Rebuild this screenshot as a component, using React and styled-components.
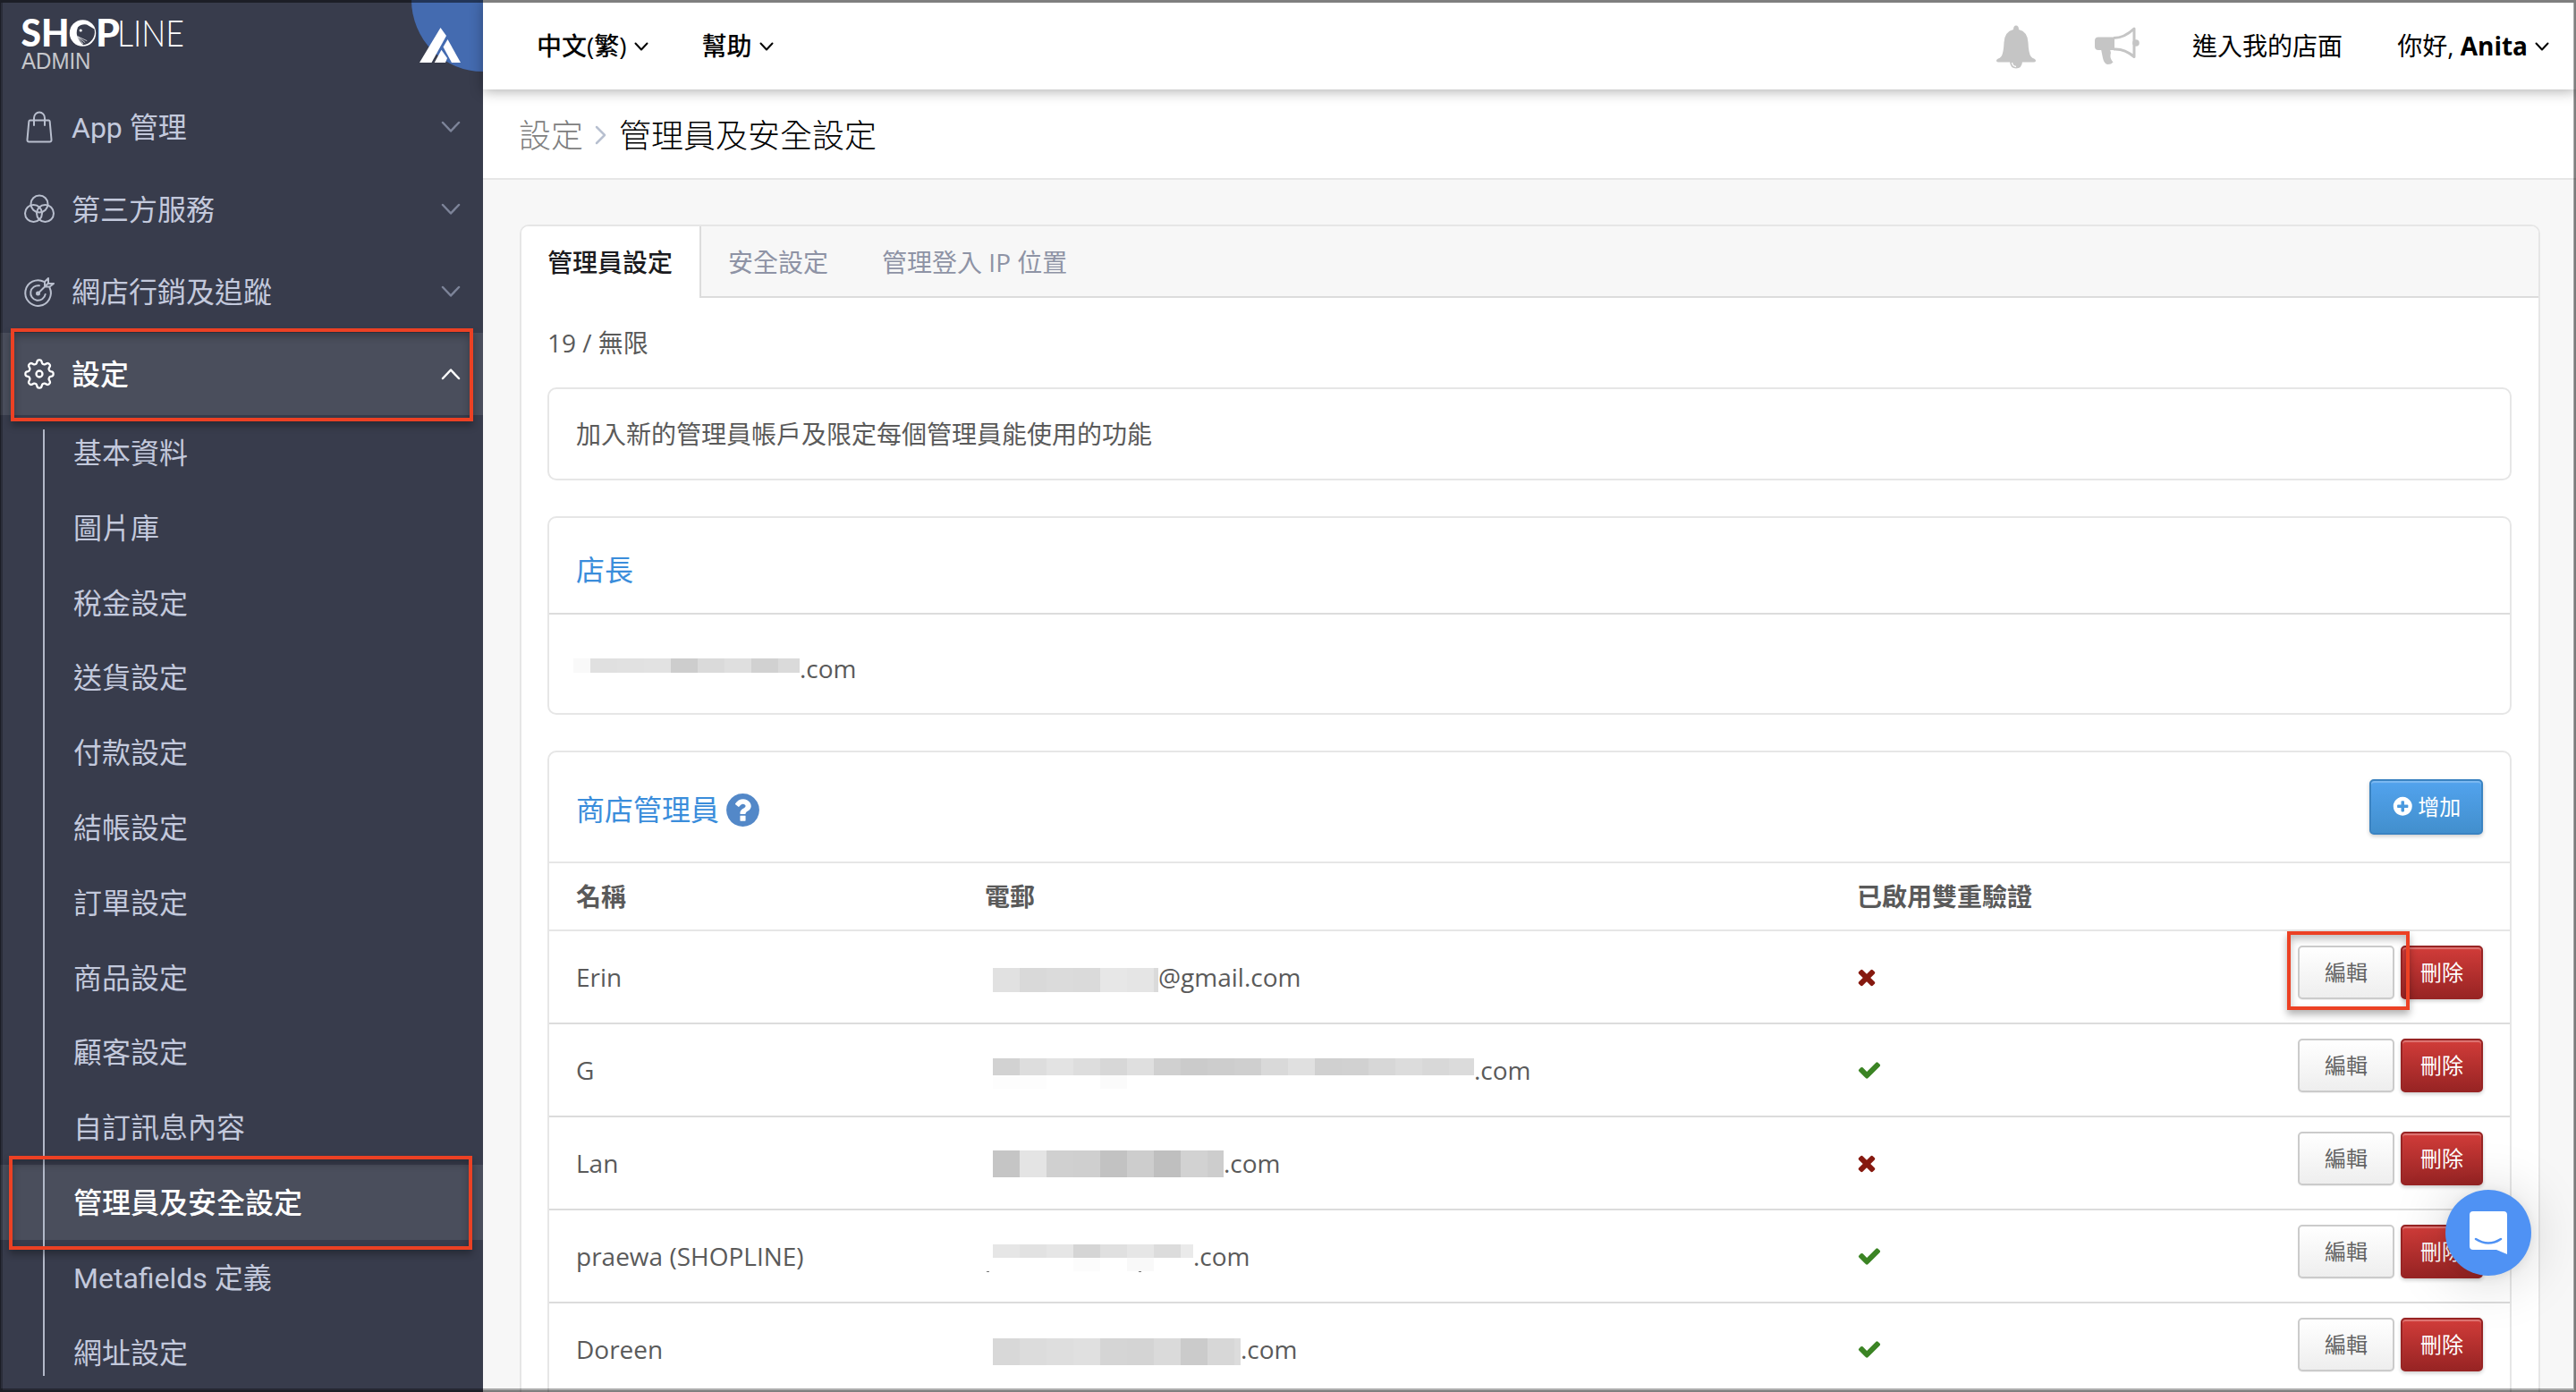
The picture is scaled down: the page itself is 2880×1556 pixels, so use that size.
/**
 * Shop admin - managers and security settings page
 *
 * @version 1.0.0
 */
import React from 'react';
import styled, { createGlobalStyle, css } from 'styled-components';

const GlobalStyle = createGlobalStyle`
  * {
    box-sizing: border-box;
  }

  body {
    margin: 0;
    color: #5a5a5a;
    font: 400 28px/1.4 "Open Sans", "Noto Sans CJK TC", sans-serif;
  }
`;

const Page = styled.div`
  position: relative;
  display: flex;
  width: 2880px;
  height: 1556px;
  overflow: hidden;
  background-color: #f7f7f7;
`;

/* dark edge drawn round the whole window */
const WindowEdge = styled.div`
  position: absolute;
  inset: 0;
  z-index: 9;
  pointer-events: none;
  border: 0 solid rgba(0, 0, 0, 0.5);
  border-width: 3px 2px 2px 1px;
  box-shadow: inset -1px -2px 0 rgba(0, 0, 0, 0.32), inset 2px 0 0 rgba(0, 0, 0, 0.25);
`;

/* ---------- sidebar ---------- */

const Sidebar = styled.aside`
  flex: 0 0 540px;
  color: #c3c9dc;
  background-color: #383c4c;
  font-family: Roboto, "Noto Sans CJK TC", sans-serif;
`;

const Brand = styled.div`
  display: flex;
  justify-content: space-between;
  height: 96px;
`;

const Corner = styled.div`
  width: 80px;
  height: 80px;
  background-color: #446bb0;
  border-bottom-left-radius: 80px;

  svg {
    display: block;
    overflow: visible;
  }
`;

const MenuItem = styled.div`
  position: relative;
  display: flex;
  align-items: center;
  height: 92px;
  padding: 0 26px 0 24px;
  font-size: 32px;

  ${({ $active }) => $active && css`
    color: white;
    font-weight: 500;
    background-color: #4a4e5c;
  `}
`;

const MenuIcon = styled.svg`
  width: 40px;
  height: 40px;
  margin-right: 16px;
  fill: none;
  stroke: ${({ $active }) => ($active ? '#fff' : '#b9bfce')};
  stroke-width: 2;
  stroke-linecap: round;
  stroke-linejoin: round;
`;

const MenuLabel = styled.span`
  flex: 1;
  padding-top: 2px;
`;

const Arrow = styled.svg`
  width: ${({ $width }) => $width || 16}px;
  height: ${({ $height }) => $height || 10}px;
  overflow: visible;
  fill: none;
  stroke: ${({ $color }) => $color || '#000'};
  stroke-width: ${({ $stroke }) => $stroke || 2}px;
  stroke-linecap: round;
  stroke-linejoin: round;
`;

const SubMenu = styled.div`
  position: relative;

  &::before {
    content: '';
    position: absolute;
    left: 48px;
    top: 16px;
    z-index: 1;
    width: 2px;
    height: 1058px;
    background-color: #b3b9c9;
  }
`;

const SubItem = styled.div`
  position: relative;
  display: flex;
  align-items: center;
  height: 83.8px;
  padding: 3px 0 0 82px;
  font-size: 32px;

  ${({ $active }) => $active && css`
    color: white;
    font-weight: 500;
    background-color: #4a4e5c;
  `}
`;

const Highlight = styled.div`
  position: absolute;
  z-index: 3;
  left: ${({ $left }) => $left}px;
  top: ${({ $top }) => $top}px;
  width: ${({ $width }) => $width}px;
  height: ${({ $height }) => $height}px;
  border: 4px solid #ec4124;
  box-shadow: 0 5px 8px rgba(0, 0, 0, 0.3), inset 0 5px 8px rgba(0, 0, 0, 0.25);
`;

/* ---------- top bar ---------- */

const Main = styled.main`
  flex: 1;
  min-width: 0;
`;

const TopBar = styled.header`
  position: relative;
  z-index: 2;
  display: flex;
  align-items: center;
  height: 100px;
  padding: 3px 30px 0 60px;
  color: black;
  background-color: white;
  box-shadow: 0 2px 14px rgba(0, 0, 0, 0.32);
`;

const TopLink = styled.div`
  display: flex;
  align-items: center;
  gap: 8px;
  margin-right: ${({ $gap }) => $gap || 0}px;
  font-weight: ${({ $weight }) => $weight || 400};
  white-space: pre;
`;

const TopRight = styled.div`
  display: flex;
  align-items: center;
  margin-left: auto;
`;

const TopIcon = styled.svg`
  width: ${({ $width }) => $width}px;
  height: 50px;
  margin: 3px ${({ $gap }) => $gap}px 0 0;
  color: #c5c5c5;
`;

const Breadcrumb = styled.div`
  display: flex;
  align-items: center;
  height: 101px;
  padding: 5px 0 0 40px;
  color: black;
  background-color: white;
  border-bottom: 2px solid #e6e6e6;
  font-size: 36px;
  font-weight: 300;

  svg {
    margin: 0 13px 2px 13px;
  }
`;

const Parent = styled.span`
  color: #808080;
`;

/* ---------- content ---------- */

const Panel = styled.section`
  width: 2259px;
  height: 1400px;
  margin: 50px 0 0 41px;
  background-color: white;
  border: 2px solid #e6e6e6;
  border-radius: 10px;
`;

const Tabs = styled.nav`
  display: flex;
  height: 80px;
  background-color: #f7f7f7;
  border-radius: 8px 8px 0 0;
`;

const Tab = styled.div`
  display: flex;
  align-items: center;
  padding: 4px 30px 0 30px;
  color: #8e93a5;
  border-bottom: 2px solid #dcdcdc;

  ${({ $active }) => $active && css`
    padding: 4px 30px 2px 29px;
    color: #1b1b20;
    font-weight: 500;
    background-color: white;
    border-right: 2px solid #dcdcdc;
    border-bottom: 0;
    border-top-left-radius: 8px;
  `}
`;

const TabFill = styled.div`
  flex: 1;
  border-bottom: 2px solid #dcdcdc;
`;

const PanelBody = styled.div`
  padding: 31px 30px 0 29px;
`;

const Quota = styled.p`
  margin: 0 0 30px;
  line-height: 39px;
`;

const Card = styled.div`
  height: ${({ $height }) => $height}px;
  margin-bottom: 40px;
  border: 2px solid #e6e6e6;
  border-radius: 10px;
`;

const CardLine = styled.div`
  position: relative;
  display: flex;
  align-items: center;
  height: ${({ $height }) => $height}px;
  padding: ${({ $drop }) => $drop || 0}px 30px 0;
  border-bottom: ${({ $line }) => ($line ? `2px solid ${$line}` : '0')};
`;

const CardTitle = styled.h2`
  margin: 0 10px 0 0;
  color: #3a8ddb;
  font-size: 32px;
  font-weight: 400;
`;

const Row = styled.div`
  position: relative;
  display: grid;
  grid-template-columns: 457px 975px 1fr;
  align-items: center;
  height: ${({ $head }) => ($head ? 76 : 104)}px;
  padding: 0 30px;
  border-bottom: 2px solid ${({ $head }) => ($head ? '#e6e6e6' : '#dcdcdc')};
  font-weight: ${({ $head }) => ($head ? 700 : 400)};
`;

const Name = styled.div`
  padding-top: 2px;
`;

const Email = styled.div`
  display: flex;
  align-items: center;
  align-self: stretch;
  padding-left: ${({ $owner }) => ($owner ? 0 : 9)}px;
  margin-left: ${({ $owner }) => ($owner ? -3 : 0)}px;

  span {
    padding-top: 2px;
  }
`;

const Status = styled.div`
  display: flex;
  align-items: center;
  justify-content: space-between;
  align-self: stretch;
`;

/* pixelated part of an address, one cell per 30px */
const Mask = styled.div`
  position: relative;
  display: flex;
  align-self: flex-start;
  height: ${({ $height }) => $height}px;
  margin-top: ${({ $top }) => $top}px;
`;

const Cell = styled.i`
  width: ${({ $width }) => $width}px;
  background-color: ${({ $color }) => $color};
`;

const Trace = styled.i`
  position: absolute;
  left: ${({ $left }) => $left}px;
  top: ${({ $top }) => $top || 100}${({ $top }) => ($top ? 'px' : '%')};
  width: ${({ $width }) => $width || 30}px;
  height: ${({ $height }) => $height || 15}px;
  background-color: ${({ $color }) => $color};
`;

const tones = {
  primary: css`
    width: 127px;
    height: 62px;
    color: white;
    background-image: linear-gradient(#52a3ee, #428fcd);
    border-color: #3a83c2;
    box-shadow: inset 0 2px 1px rgba(255, 255, 255, 0.25), 0 2px 4px rgba(0, 0, 0, 0.2);
  `,
  plain: css`
    width: 108px;
    height: 60px;
    color: #646464;
    background-image: linear-gradient(#fff, #eee);
    border-color: #cbcbcb;
    box-shadow: 0 1px 1px rgba(0, 0, 0, 0.06);
  `,
  danger: css`
    width: 92px;
    height: 60px;
    color: white;
    background-image: linear-gradient(#d13c39, #982424);
    border-color: #982424;
    box-shadow: inset 0 2px 1px rgba(255, 255, 255, 0.3), 0 2px 4px rgba(0, 0, 0, 0.2);
  `,
};

const Button = styled.button`
  display: flex;
  align-items: center;
  justify-content: center;
  gap: 5px;
  padding: 0;
  font: 400 24px/1 "Open Sans", "Noto Sans CJK TC", sans-serif;
  border: 2px solid;
  border-radius: 5px;
  ${({ $tone }) => tones[$tone]}
`;

const Actions = styled.div`
  display: flex;
  gap: 7px;
  align-self: flex-start;
  margin-top: 16px;
`;

const AddButton = styled(Button)`
  margin: -7px 0 0 auto;
`;

const Glyph = styled.svg`
  width: ${({ $size }) => $size}px;
  height: ${({ $size }) => $size}px;
  margin-left: ${({ $shift }) => $shift || 0}px;
  fill: ${({ $color }) => $color};
`;

const ChatBubble = styled.div`
  position: absolute;
  left: 2734px;
  top: 1330px;
  z-index: 4;
  width: 96px;
  height: 96px;
  background-color: #4f92f4;
  border-radius: 50%;
  box-shadow: 0 2px 12px rgba(0, 0, 0, 0.08), 0 4px 64px rgba(0, 0, 0, 0.18);
`;

const GLYPHS = {
  times: 'M1490 1322q0 40-28 68l-136 136q-28 28-68 28t-68-28l-294-294-294 294q-28 28-68 28t-68-28l-136-136q-28-28-28-68t28-68l294-294-294-294q-28-28-28-68t28-68l136-136q28-28 68-28t68 28l294 294 294-294q28-28 68-28t68 28l136 136q28 28 28 68t-28 68l-294 294 294 294q28 28 28 68z',
  check: 'M1671 566q0 40-28 68l-724 724-136 136q-28 28-68 28t-68-28l-136-136-362-362q-28-28-28-68t28-68l136-136q28-28 68-28t68 28l294 295 656-657q28-28 68-28t68 28l136 136q28 28 28 68z',
  question: 'M1024 1376v-192q0-14-9-23t-23-9h-192q-14 0-23 9t-9 23v192q0 14 9 23t23 9h192q14 0 23-9t9-23zm256-672q0-88-55.5-163t-138.5-116-170-41q-243 0-371 213-15 24 8 42l132 100q7 6 19 6 16 0 25-12 53-68 86-92 34-24 86-24 48 0 85.5 26t37.5 59q0 38-20 61t-68 45q-63 28-115.5 86.5t-52.5 125.5v36q0 14 9 23t23 9h192q14 0 23-9t9-23q0-19 21.5-49.5t54.5-49.5q32-18 49-28.5t46-35 44.5-48 28-60.5 12.5-81zm384 192q0 209-103 385.5t-279.5 279.5-385.5 103-385.5-103-279.5-279.5-103-385.5 103-385.5 279.5-279.5 385.5-103 385.5 103 279.5 279.5 103 385.5z',
  plus: 'M1344 960v-128q0-26-19-45t-45-19h-256v-256q0-26-19-45t-45-19h-128q-26 0-45 19t-19 45v256h-256q-26 0-45 19t-19 45v128q0 26 19 45t45 19h256v256q0 26 19 45t45 19h128q26 0 45-19t19-45v-256h256q26 0 45-19t19-45zm320-64q0 209-103 385.5t-279.5 279.5-385.5 103-385.5-103-279.5-279.5-103-385.5 103-385.5 279.5-279.5 385.5-103 385.5 103 279.5 279.5 103 385.5z',
};

const Icon = ({ name, size, color, shift }) => (
  <Glyph viewBox="0 0 1792 1792" $size={size} $color={color} $shift={shift}>
    <path d={GLYPHS[name]}/>
  </Glyph>
);

// outline of a cog with eight round teeth, centred on 20,20
const cogPath = () => {
  const points = [];
  for (let i = 0; i < 160; i += 1) {
    const angle = (i / 160) * Math.PI * 2;
    const r = 13.7 + 2 * Math.tanh(1.8 * Math.cos(angle * 8));
    points.push(`${(20 + r * Math.cos(angle)).toFixed(2)} ${(20 + r * Math.sin(angle)).toFixed(2)}`);
  }
  return `M${points.join('L')}Z`;
};

const menuIcons = {
  bag: (
    <>
      <path d="M9.5 12.5h21q1 0 1.2 1.5l1.8 20q.2 2.5-2 2.5h-23q-2.2 0-2-2.5l1.8-20q.2-1.5 1.2-1.5z"/>
      <path d="M14 18v-8a6 6.500 0 0 1 12 0v8"/>
    </>
  ),
  circles: (
    <>
      <circle cx="20" cy="14" r="9.500"/>
      <circle cx="13.500" cy="24.500" r="9.500"/>
      <circle cx="26.500" cy="24.500" r="9.500"/>
    </>
  ),
  target: (
    <>
      <path d="M25.2 8.900A14.300 14.300 0 1 0 31.500 15.500"/>
      <path d="M19.900 13.300A8.300 8.300 0 1 0 26.700 22.900"/>
      <path d="M18.500 22L29.500 11M30 5v6h6M26 14.500v-5.500l4-4M26 14.500h5.500l4.500-3.500"/>
      <circle cx="18.500" cy="22" r="1.500"/>
    </>
  ),
  cog: (
    <>
      <path d={cogPath()} strokeWidth="2.300"/>
      <circle cx="20" cy="20" r="3.500" strokeWidth="2.300"/>
    </>
  ),
};

const menu = [
  { label: 'App 管理', icon: 'bag' },
  { label: '第三方服務', icon: 'circles' },
  { label: '網店行銷及追蹤', icon: 'target' },
  { label: '設定', icon: 'cog', active: true },
];

const settings = [
  '基本資料',
  '圖片庫',
  '稅金設定',
  '送貨設定',
  '付款設定',
  '結帳設定',
  '訂單設定',
  '商品設定',
  '顧客設定',
  '自訂訊息內容',
  '管理員及安全設定',
  'Metafields 定義',
  '網址設定',
];

const owner = { top: 49, height: 16, first: 19, last: 24, cells: 'f9 e0 e1 e2 cd da df d1 da' };

const managers = [
  {
    name: 'Erin',
    email: '@gmail.com',
    mask: { top: 41, height: 27, last: 5, cells: 'e1 d9 db da e7 e5 da' },
  },
  {
    name: 'G',
    email: '.com',
    enabled: true,
    mask: {
      top: 38,
      height: 19,
      last: 28,
      cells: 'd2 dd e3 dd d7 df d0 cb cd cf d9 e0 d0 d1 d7 dc d8 db',
      traces: [{ left: 0, width: 60, color: '#fdfdfd' }, { left: 120, color: '#fbfbfb' }],
    },
  },
  {
    name: 'Lan',
    email: '.com',
    mask: { top: 37, height: 30, last: 18, cells: 'c5 e4 d0 cf c2 cd bf d2 cd' },
  },
  {
    name: 'praewa (SHOPLINE)',
    email: '.com',
    enabled: true,
    mask: {
      top: 38,
      height: 15,
      last: 14,
      cells: 'e6 e2 e6 d5 e0 e6 dc ea',
      traces: [
        { left: 90, color: '#fcfcfc' },
        { left: 150, color: '#f9f9f9' },
        { left: -7, top: 30, width: 3, height: 1, color: '#777' },
        { left: 163, top: 30, width: 3, height: 1, color: '#777' },
      ],
    },
  },
  {
    name: 'Doreen',
    email: '.com',
    enabled: true,
    mask: { top: 39, height: 30, last: 7, cells: 'd8 dc de e0 d5 d4 da cb d7 dc' },
  },
];

const MaskedText = ({ mask }) => {
  const shades = mask.cells.split(' ');
  const widthOf = (i) => {
    if (i === 0 && mask.first) return mask.first;
    return i === shades.length - 1 ? mask.last : 30;
  };

  return (
    <Mask $top={mask.top} $height={mask.height}>
      {shades.map((shade, i) => (
        <Cell key={i} $width={widthOf(i)} $color={`#${shade}${shade}${shade}`}/>
      ))}
      {(mask.traces || []).map((t) => (
        <Trace key={t.left} $left={t.left} $top={t.top} $width={t.width} $height={t.height} $color={t.color}/>
      ))}
    </Mask>
  );
};

const DownArrow = () => (
  <Arrow viewBox="0 0 16 10">
    <path d="M1.500 1.500L8 8.500l6.500-7"/>
  </Arrow>
);

const Logo = () => (
  <svg width="230" height="90" viewBox="0 0 230 90">
    <g fill="#fff" fontFamily="Lato, sans-serif" fontSize="41.500">
      <text x="23.500" y="52" fontWeight="900" textLength="54" lengthAdjust="spacingAndGlyphs">SH</text>
      <text x="107" y="52" fontWeight="900" textLength="27" lengthAdjust="spacingAndGlyphs">P</text>
      <text x="131" y="52" fontWeight="300" textLength="75" lengthAdjust="spacingAndGlyphs">LINE</text>
    </g>
    <circle cx="92.500" cy="37" r="14.700" fill="#fff"/>
    <path d="M87 30.500Q91 26.500 97 27.500L105.500 32.500Q107 39 103 44.500 98.500 50 93 50.300 88.500 46 87 42 84.500 37 87 30.500z" fill="#383c4c"/>
    <circle cx="90.200" cy="34" r="1.600" fill="#fff"/>
    <path d="M86.700 40.700l10.600 5M86.700 40.700l8.500 7M87 41.500l6 7.500" stroke="#fff" strokeWidth="0.700"/>
    <text x="24" y="77" fill="#c6c7cb" fontFamily="Liberation Sans, sans-serif" fontSize="25" textLength="77.500" lengthAdjust="spacingAndGlyphs">ADMIN</text>
  </svg>
);

export default () => (
  <Page>
    <GlobalStyle/>
    <Sidebar>
      <Brand>
        <Logo/>
        <Corner>
          <svg width="80" height="80" viewBox="460 0 80 80">
            <path d="M492.500 31L469 70h13.500L499 40z" fill="#fff"/>
            <path d="M500.500 44L515 70h-10l-9.500-17.500z" fill="#fff"/>
            <path d="M493.500 55.700L485.700 70H498l2-5z" fill="#fff"/>
          </svg>
        </Corner>
      </Brand>
      {menu.map(({ label, icon, active }) => (
        <MenuItem key={label} $active={active}>
          <MenuIcon viewBox="0 0 40 40" $active={active}>{menuIcons[icon]}</MenuIcon>
          <MenuLabel>{label}</MenuLabel>
          <Arrow viewBox="0 0 20 12" $width={20} $height={12} $stroke={2.5} $color={active ? '#fff' : '#7d8499'}>
            <path d={active ? 'M1 11L10 1.500l9 9.500' : 'M1 1l9 9.500L19 1'}/>
          </Arrow>
          {active && <Highlight $left={12} $top={-5} $width={517} $height={104}/>}
        </MenuItem>
      ))}
      <SubMenu>
        {settings.map((label) => (
          <SubItem key={label} $active={label === '管理員及安全設定'}>
            {label}
            {label === '管理員及安全設定' && <Highlight $left={10} $top={-10} $width={518} $height={105}/>}
          </SubItem>
        ))}
      </SubMenu>
    </Sidebar>
    <Main>
      <TopBar>
        <TopLink $gap={60} $weight={500}>中文(繁)<DownArrow/></TopLink>
        <TopLink $weight={500}>幫助<DownArrow/></TopLink>
        <TopRight>
          <TopIcon viewBox="0 0 46 50" $width={46} $gap={64}>
            <path fill="currentColor" d="M23 0.500q3 0 3 4.500 10 2.500 10.500 14.500 0.500 12 3 15.500 1.500 2 4 2.700 2 1 1.500 2.500-0.500 1.300-2.500 1.300h-39q-2 0-2.500-1.300-0.500-1.500 1.500-2.500 2.500-0.700 4-2.700 2.500-3.500 3-15.500Q10 7.500 20 5q0-4.500 3-4.500z"/>
            <path fill="currentColor" d="M16 41h14q-.5 7.500-7 7.500T16 41z"/>
            <path fill="none" stroke="#fff" strokeWidth="1.300" d="M18.500 42q.5 4 4.500 4.500"/>
          </TopIcon>
          <TopIcon viewBox="0 0 52 50" $width={52} $gap={58}>
            <path fill="currentColor" d="M5 13.500h18v14.500H5q-4 0-4-4v-6.500q0-4 4-4zM8 27h10q1.500 4 .5 6.500-.5 4 3 8-2 2.500-6 2.500-4-.5-5.500-7Q9 32 8 27z"/>
            <path fill="none" stroke="currentColor" strokeWidth="3" strokeLinejoin="round" d="M22 14.500q12 0 23-10.500V35.500Q34 26 22 27"/>
            <circle cx="47" cy="20" r="3.800" fill="currentColor"/>
          </TopIcon>
          <TopLink $gap={61}>進入我的店面</TopLink>
          <TopLink>
            <span>你好, <b>Anita</b></span>
            <DownArrow/>
          </TopLink>
        </TopRight>
      </TopBar>
      <Breadcrumb>
        <Parent>設定</Parent>
        <Arrow viewBox="0 0 14 20" $width={14} $height={20} $color="#b8c0d0" $stroke={2.5}>
          <path d="M2 1l9 9-9 9"/>
        </Arrow>
        管理員及安全設定
      </Breadcrumb>
      <Panel>
        <Tabs>
          <Tab $active>管理員設定</Tab>
          <Tab>安全設定</Tab>
          <Tab>管理登入 IP 位置</Tab>
          <TabFill/>
        </Tabs>
        <PanelBody>
          <Quota>19 / 無限</Quota>
          <Card $height={104}>
            <CardLine $height={100} $drop={2}>加入新的管理員帳戶及限定每個管理員能使用的功能</CardLine>
          </Card>
          <Card $height={222}>
            <CardLine $height={108} $drop={11} $line="#dcdcdc">
              <CardTitle>店長</CardTitle>
            </CardLine>
            <CardLine $height={120}>
              <Email $owner>
                <MaskedText mask={owner}/>
                <span>.com</span>
              </Email>
            </CardLine>
          </Card>
          <Card $height={900}>
            <CardLine $height={124} $drop={6} $line="#e6e6e6">
              <CardTitle>商店管理員</CardTitle>
              <Icon name="question" size={43} color="#5388c8" shift={-5}/>
              <AddButton $tone="primary">
                <Icon name="plus" size={24.5} color="#fff"/>
                增加
              </AddButton>
            </CardLine>
            <Row $head>
              <Name>名稱</Name>
              <Name>電郵</Name>
              <Name>已啟用雙重驗證</Name>
            </Row>
            {managers.map(({ name, email, enabled, mask }, i) => (
              <Row key={name}>
                <Name>{name}</Name>
                <Email>
                  <MaskedText mask={mask}/>
                  <span>{email}</span>
                </Email>
                <Status>
                  {enabled
                    ? <Icon name="check" size={28} color="#3b8424"/>
                    : <Icon name="times" size={28} color="#86190f" shift={-3}/>}
                  <Actions>
                    <Button $tone="plain">編輯</Button>
                    <Button $tone="danger">刪除</Button>
                  </Actions>
                </Status>
                {i === 0 && <Highlight $left={1943} $top={0} $width={137} $height={88}/>}
              </Row>
            ))}
          </Card>
        </PanelBody>
      </Panel>
    </Main>
    <ChatBubble>
      <svg width="96" height="96" viewBox="0 0 96 96">
        <path fill="#fff" d="M31 24h34q4 0 4 4v44l-12-5H31q-4 0-4-4V28q0-4 4-4z"/>
        <path fill="none" stroke="#4f92f4" strokeWidth="2.500" strokeLinecap="round" d="M34 55q14 9 28 0"/>
      </svg>
    </ChatBubble>
    <WindowEdge/>
  </Page>
);
